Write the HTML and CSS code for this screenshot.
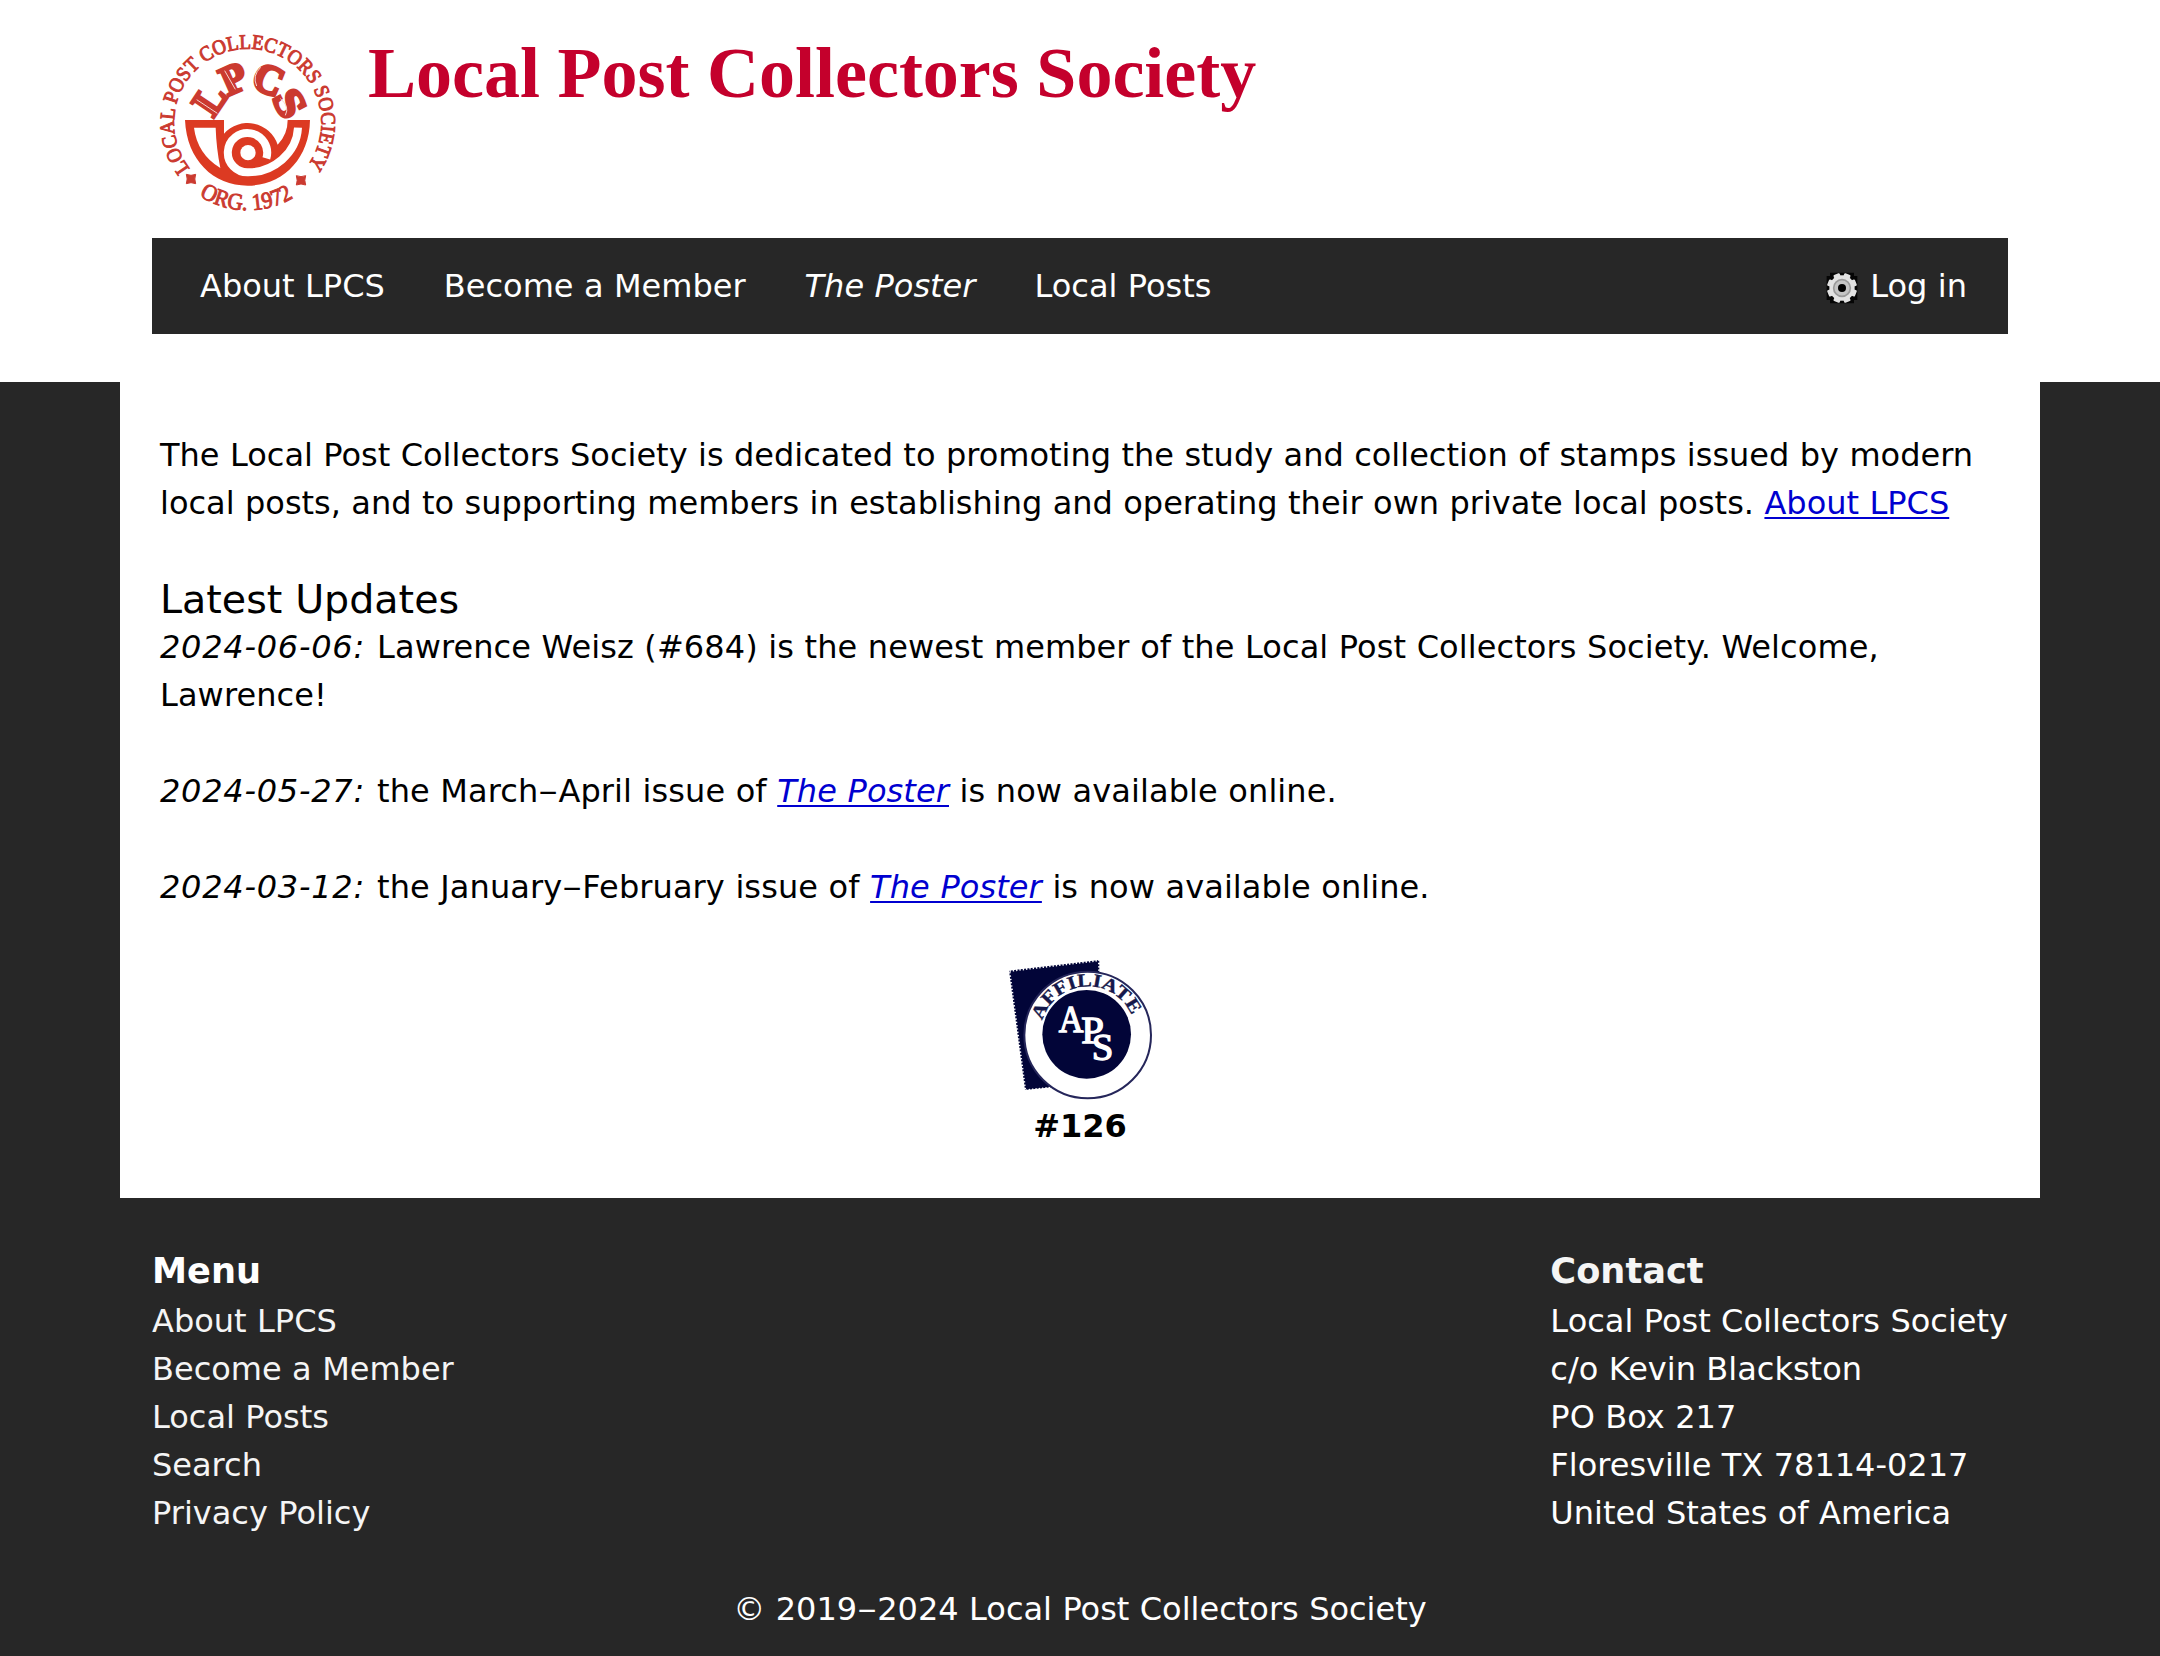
FILE: index.html
```html
<!DOCTYPE html>
<html lang="en">
<head>
<meta charset="utf-8">
<title>Local Post Collectors Society</title>
<link rel="stylesheet" href="styles.css">
</head>
<body>
<header class="header">
  <div class="inner">
    <div class="brand">
      <svg class="logo" viewBox="36 0 558 630" role="img" aria-label="LPCS logo">
        <defs>
          <path id="ring-top" d="M150 446A221 222 0 1 1 501 440"/>
          <path id="ring-bottom" d="M168 520A265 265 0 0 0 474 524"/>
        </defs>
        <g fill="#cb3a30" font-family="'Liberation Serif', serif">
          <text class="ring" font-size="62" textLength="982" lengthAdjust="spacingAndGlyphs"><textPath href="#ring-top" textLength="982" lengthAdjust="spacingAndGlyphs">LOCAL POST COLLECTORS SOCIETY</textPath></text>
          <text class="ring" font-size="70" textLength="298" lengthAdjust="spacingAndGlyphs"><textPath href="#ring-bottom" startOffset="12" textLength="298" lengthAdjust="spacingAndGlyphs">ORG. 1972</textPath></text>
          <g class="initials" font-size="124" font-weight="bold" text-anchor="middle">
            <text transform="translate(243 261) rotate(-56)">L</text>
            <text transform="translate(298 213) rotate(-24)">P</text>
            <text transform="translate(370 216) rotate(23)">C</text>
            <text transform="translate(413 269) rotate(62) scale(1.15 1)">S</text>
          </g>
          <path d="M139 463q14 6 28 0q-5 14 0 28q-14-6-28 0q5-14 0-28zM469 467q14 6 28 0q-5 14 0 28q-14-6-28 0q5-14 0-28z" stroke="#cb3a30" stroke-width="3"/>
        </g>
        <path fill="none" stroke="#f6d5d0" stroke-width="3" d="M170 239L232 280M254 152L286 208M350 198Q336 167 362 142M421 236Q450 259 436 286"/>
        <path fill="#dc3a22" d="M135 300H252V341A95 95 0 0 1 413 374Q443 344 443 300H510C508 420 425 497 323 497C220 497 140 420 135 300Z"/>
        <path fill="#fff" d="M162 323H227Q229 385 241 444Q172 402 162 323Z"/>
        <path fill="none" stroke="#fff" stroke-width="24" d="M379 415A59 59 0 1 0 325 457C400 457 470 400 474 323"/>
        <circle cx="324" cy="398" r="23" fill="#fff"/>
      </svg>
      <h1 class="title">Local Post Collectors Society</h1>
    </div>
    <nav class="nav">
      <a href="#">About LPCS</a>
      <a href="#">Become a Member</a>
      <a href="#"><i>The Poster</i></a>
      <a href="#">Local Posts</a>
      <a class="login" href="#">
        <svg class="gear" viewBox="0 0 96 96" aria-hidden="true">
          <path fill="#050505" d="M12 2H84V12H94V84H84V94H12V84H2V12H12Z"/>
          <g fill="#e2e2e2">
            <circle cx="48" cy="48" r="38"/>
            <rect x="38" y="3" width="20" height="90" rx="3" transform="rotate(22.5 48 48)"/>
            <rect x="38" y="3" width="20" height="90" rx="3" transform="rotate(67.5 48 48)"/>
            <rect x="38" y="3" width="20" height="90" rx="3" transform="rotate(112.5 48 48)"/>
            <rect x="38" y="3" width="20" height="90" rx="3" transform="rotate(157.5 48 48)"/>
          </g>
          <circle cx="48" cy="48" r="25" fill="#c4c4c4" stroke="#9a9a9a" stroke-width="5"/>
          <circle cx="48" cy="48" r="12" fill="#000"/>
        </svg>
        <span>Log in</span>
      </a>
    </nav>
  </div>
</header>
<main class="content">
  <p>The Local Post Collectors Society is dedicated to promoting the study and collection of stamps issued by modern local posts, and to supporting members in establishing and operating their own private local posts. <a href="#">About LPCS</a></p>
  <h2>Latest Updates</h2>
  <p class="news"><i class="date">2024-06-06:</i> Lawrence Weisz (#684) is the newest member of the Local Post Collectors Society. Welcome, Lawrence!</p>
  <p class="news"><i class="date">2024-05-27:</i> the March<span class="dash">–</span>April issue of <a href="#"><i>The Poster</i></a> is now available online.</p>
  <p class="news"><i class="date">2024-03-12:</i> the January<span class="dash">–</span>February issue of <a href="#"><i>The Poster</i></a> is now available online.</p>
  <div class="affiliate">
    <svg class="aps" viewBox="0 0 540 486" role="img" aria-label="APS affiliate">
      <defs><path id="aps-arc" d="M157 242A142 142 0 0 1 430 242"/></defs>
      <path fill="#020538" d="M57 92L328 60V300L200 440L105 450Z"/>
      <path fill="none" stroke="#fff" stroke-width="8" stroke-dasharray="4 6" d="M200 442L105 452L57 92L328 60V110"/>
      <circle cx="293" cy="285" r="190" fill="#fff" stroke="#25265a" stroke-width="6"/>
      <circle cx="290" cy="283" r="133" fill="#020538"/>
      <g font-family="'Liberation Serif', serif">
        <text font-size="56" font-weight="bold" fill="#15184a" stroke="#15184a" textLength="350" lengthAdjust="spacingAndGlyphs"><textPath href="#aps-arc" textLength="350" lengthAdjust="spacingAndGlyphs">AFFILIATE</textPath></text>
        <g fill="#fff" stroke="#fff" stroke-width="4" font-size="114">
          <text x="206" y="277" textLength="74" lengthAdjust="spacingAndGlyphs">A</text>
          <text x="274" y="310" textLength="68" lengthAdjust="spacingAndGlyphs">P</text>
          <text x="305" y="359" textLength="65" lengthAdjust="spacingAndGlyphs">S</text>
        </g>
      </g>
    </svg>
    <strong>#126</strong>
  </div>
</main>
<footer class="footer">
  <div class="columns">
    <div class="menu">
      <h3>Menu</h3>
      <a href="#">About LPCS</a>
      <a href="#">Become a Member</a>
      <a href="#">Local Posts</a>
      <a href="#">Search</a>
      <a href="#">Privacy Policy</a>
    </div>
    <div class="contact">
      <h3>Contact</h3>
      <address>Local Post Collectors Society<br>c/o Kevin Blackston<br>PO Box 217<br>Floresville TX 78114-0217<br>United States of America</address>
    </div>
  </div>
  <div class="copyright">© 2019<span class="dash">–</span>2024 Local Post Collectors Society</div>
</footer>
</body>
</html>
```
FILE: styles.css
```css
* { box-sizing: border-box; }

body {
  margin: 0;
  background: #272727;
  color: #000;
  font: 32px/48px Verdana, "DejaVu Sans", sans-serif;
  word-spacing: 0.25px;
}

h1, h2, h3, p { margin: 0; }

.header {
  height: 382px;
  padding-top: 20px;
  background: #fff;
}

.inner, .columns {
  width: 1856px;
  margin: 0 auto;
}

.brand {
  display: flex;
  gap: 30px;
  height: 218px;
}

.logo {
  width: 186px;
  height: 210px;
  overflow: visible;
}

.ring {
  stroke: #cb3a30;
  stroke-width: 3px;
}

.initials {
  stroke: #cb3a30;
  stroke-width: 9px;
}

.title {
  margin-top: 13px;
  color: #c4002c;
  font: bold 72px/80px "Liberation Serif", "Times New Roman", serif;
  word-spacing: -0.5px;
}

.nav {
  display: flex;
  gap: 59px;
  height: 96px;
  padding: 0 41px 0 48px;
  background: #272727;
  line-height: 96px;
}

.nav a {
  color: #fff;
  text-decoration: none;
}

.nav .login {
  display: flex;
  align-items: center;
  gap: 12px;
  margin-left: auto;
}

.gear {
  width: 32px;
  height: 32px;
  margin-top: 4px;
}

.content {
  width: 1920px;
  height: 816px;
  margin: 0 auto;
  padding: 49px 40px 0;
  background: #fff;
}

.content p { margin-bottom: 48px; }

.content h2 {
  font-size: 39.6px;
  font-weight: normal;
  line-height: 48px;
}

.content a {
  color: #0000d0;
  text-decoration-thickness: 2px;
  text-underline-offset: 3px;
}

.news { letter-spacing: 0.09px; }

.date {
  margin-right: 1.5px;
  letter-spacing: 0.75px;
}

.dash {
  display: inline-block;
  transform: scaleX(1.2);
  margin: 0 2px;
}

.affiliate {
  display: flex;
  flex-direction: column;
  align-items: center;
  margin-top: -19px;
}

.aps {
  width: 180px;
  height: 162px;
}

.footer {
  padding-top: 48px;
  color: #fff;
}

.columns {
  display: flex;
  justify-content: space-between;
}

.footer h3 {
  font-size: 35.2px;
  line-height: 50px;
  margin-bottom: 1px;
}

.menu {
  display: flex;
  flex-direction: column;
}

.menu a {
  color: #f5f5f5;
  text-decoration: none;
}

.contact h3 { color: #f5f5f5; }

.contact address { font-style: normal; }

.copyright {
  margin-top: 48px;
  text-align: center;
}
```
